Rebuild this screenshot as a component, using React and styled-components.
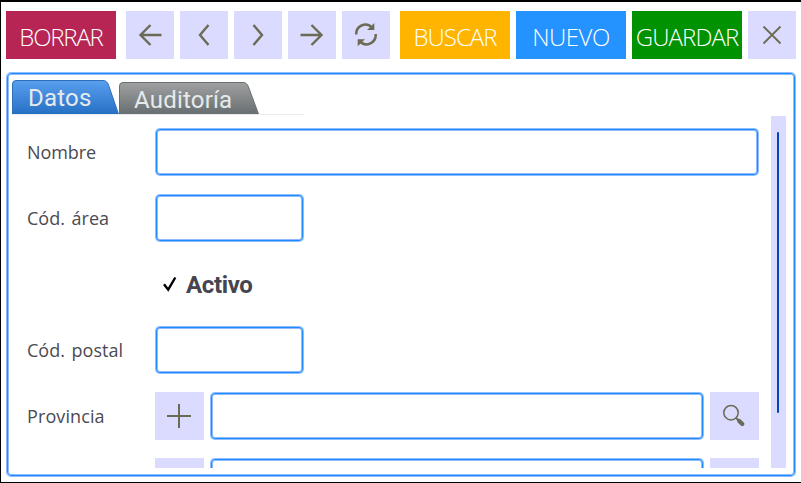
import React from "react";
import styled, { createGlobalStyle } from "styled-components";

const GlobalStyle = createGlobalStyle`
  * { box-sizing: border-box; }
  body { margin: 0; background: #fff; overflow: hidden; }
  button { border: 0; padding: 0; }
`;

const Window = styled.div`
  display: flex;
  flex-direction: column;
  width: 801px;
  height: 483px;
  padding: 9px 5px 6px 5px;
  border: solid #000;
  border-width: 2px 0 1px 1px;
  background: #fff;
  overflow: hidden;
`;

const Toolbar = styled.div`
  display: flex;
  height: 48px;
  gap: 6px;
`;

const Group = styled.div`
  display: flex;
  gap: 6px;
  margin: 0 4px;
`;

const ActionButton = styled.button`
  display: flex;
  align-items: center;
  justify-content: center;
  width: 110px;
  height: 48px;
  padding-top: 2px;
  background: ${(p) => p.$color};
  color: #fff;
  font: 300 24px "Open Sans", sans-serif;
  letter-spacing: ${(p) => p.$spacing || 0}px;
  white-space: nowrap;
`;

const IconButton = styled.button`
  display: flex;
  align-items: center;
  justify-content: flex-start;
  flex: none;
  width: ${(p) => p.$width || 48}px;
  height: 48px;
  background: #dbdbff;
  color: #6b6b55;
  svg { display: block; }
`;

const Panel = styled.main`
  display: flex;
  flex-direction: column;
  width: 788px;
  height: 403px;
  margin: 14px 0 0 1px;
  padding: 6px 8px 7px 4px;
  border: 1px solid #1e8cff;
  border-radius: 4px;
  box-shadow: 0 0 0 1px #8ebcff, inset 0 0 0 1px #8ebcff;
`;

const TabBar = styled.div`
  display: flex;
  align-items: flex-end;
  width: 292px;
  height: 35px;
  border-bottom: 1px solid #ebebeb;
`;

const TabButton = styled.div`
  display: grid;
  width: ${(p) => p.$width}px;
  height: ${(p) => p.$height}px;
  > * { grid-area: 1 / 1; }
`;

const TabText = styled.span`
  padding: 4px 0 0 ${(p) => p.$left}px;
  color: #e6eaea;
  font: 400 24px/28px Roboto, sans-serif;
  letter-spacing: 0.2px;
  white-space: nowrap;
`;

const Content = styled.div`
  display: flex;
  justify-content: space-between;
  height: 352px;
  margin-top: 1px;
`;

const Form = styled.div`
  display: flex;
  flex-direction: column;
  gap: 18px;
  width: 748px;
  padding-top: 12px;
  overflow: hidden;
`;

const Row = styled.div`
  display: flex;
  flex: none;
  height: 48px;
`;

const Label = styled.label`
  flex: none;
  width: 143px;
  padding: 1px 0 0 15px;
  color: #4a4a52;
  font: 400 18px/46px "Open Sans", sans-serif;
  letter-spacing: ${(p) => p.$spacing || 0}px;
  word-spacing: 2px;
  white-space: nowrap;
`;

const Input = styled.input`
  width: ${(p) => p.$width - 2}px;
  height: 46px;
  margin: 1px;
  padding: 0 8px;
  border: 1px solid #1e8cff;
  border-radius: 4px;
  outline: 0;
  background: #fff;
  box-shadow: 0 0 0 1px #8ebcff, inset 0 0 0 1px #8ebcff;
  font: 18px "Open Sans", sans-serif;
`;

const Lookup = styled.div`
  display: flex;
  gap: 6px;
`;

const Check = styled.div`
  display: flex;
  align-items: center;
  gap: 7px;
  padding: 2px 0 0 7px;
  color: #45454f;
  font: 700 24px Roboto, sans-serif;
  letter-spacing: -0.35px;
`;

const Track = styled.div`
  display: flex;
  justify-content: center;
  width: 15px;
  height: 352px;
  padding-top: 16px;
  background: #dbdbff;
`;

const Thumb = styled.div`
  width: 2px;
  height: 281px;
  margin-right: 1px;
  border-radius: 1px;
  background: #0047b3;
`;

const strokes = { fill: "none", stroke: "currentColor", strokeWidth: 2.2 };

const LineIcon = ({ d, width = 2.4 }) => (
  <svg width="48" height="48" viewBox="0 0 48 48" {...strokes} strokeWidth={width}>
    <path d={d} />
  </svg>
);

const RefreshIcon = () => (
  <svg width="48" height="48" viewBox="0 0 48 48" {...strokes}>
    <path d="M14.2 23.5C14 14.2 24.5 10.2 30.5 17M33.8 23C34 32.5 23.5 36.8 17.5 30" strokeWidth="2.5" />
    <path d="M32.3 12V19H25ZM15.7 35.3V28.2H23Z" fill="currentColor" stroke="none" />
  </svg>
);

const SearchIcon = () => (
  <svg width="48" height="48" viewBox="0 0 48 48" {...strokes}>
    <circle cx="21" cy="20.7" r="7.2" strokeWidth="1.5" />
    <path d="M26 26L28.5 28.3" strokeWidth="1.9" />
    <path d="M29.2 29L32.3 32" strokeWidth="4.2" strokeLinecap="round" />
  </svg>
);

function Tab({ id, width, height, colors, edge, left, children }) {
  return (
    <TabButton $width={width} $height={height}>
      <svg width={width} height={height}>
        <defs>
          <linearGradient id={id} x1="0" y1="0" x2="0" y2="1">
            <stop stopColor={colors[0]} />
            <stop offset="1" stopColor={colors[1]} />
          </linearGradient>
        </defs>
        <path
          d={`M.5 ${height}V4Q.5 .5 4 .5H${width - 16}Q${width - 12} .5 ${width - 10.5} 5L${width - 0.5} ${height}`}
          fill={`url(#${id})`}
          stroke={edge}
          strokeWidth="1"
        />
      </svg>
      <TabText $left={left}>{children}</TabText>
    </TabButton>
  );
}

const LookupField = () => (
  <Lookup>
    <IconButton $width={49}><LineIcon d="M24 12V36M12 24H36" width={2} /></IconButton>
    <Input $width={494} />
    <IconButton $width={49}><SearchIcon /></IconButton>
  </Lookup>
);

export default function App() {
  return (
    <>
      <GlobalStyle />
      <Window>
        <Toolbar>
          <ActionButton $color="#b62553" $spacing={-1.2}>BORRAR</ActionButton>
          <Group>
            <IconButton><LineIcon d="M35.5 24H14M24.5 14L14.5 24L24.5 34" /></IconButton>
            <IconButton><LineIcon d="M28.5 14L20 24L28.5 34" /></IconButton>
            <IconButton><LineIcon d="M19.5 14L28 24L19.5 34" /></IconButton>
            <IconButton><LineIcon d="M12.5 24H34M23.5 14L33.5 24L23.5 34" /></IconButton>
            <IconButton><RefreshIcon /></IconButton>
          </Group>
          <ActionButton $color="#ffb400" $spacing={-1}>BUSCAR</ActionButton>
          <ActionButton $color="#2492ff" $spacing={-0.5}>NUEVO</ActionButton>
          <ActionButton $color="#009200" $spacing={-0.9}>GUARDAR</ActionButton>
          <IconButton><LineIcon d="M15.5 15.5L32.5 32.5M32.5 15.5L15.5 32.5" width={1.8} /></IconButton>
        </Toolbar>
        <Panel>
          <TabBar>
            <Tab id="active-tab" width={107} height={34} colors={["#5a9ff0", "#2670c4"]} edge="#2d6fb8" left={16}>Datos</Tab>
            <Tab id="idle-tab" width={140} height={32} colors={["#a0a0a0", "#686f71"]} edge="#667174" left={15}>Auditoría</Tab>
          </TabBar>
          <Content>
            <Form>
              <Row><Label $spacing={-0.1}>Nombre</Label><Input $width={604} /></Row>
              <Row><Label>Cód. área</Label><Input $width={149} /></Row>
              <Row>
                <Label />
                <Check>
                  <svg width="17" height="20" viewBox="0 0 17 20" {...strokes} stroke="#000" strokeWidth="2.4">
                    <path d="M2 9.3L6.2 14.7L13.3 2.5" />
                  </svg>
                  Activo
                </Check>
              </Row>
              <Row><Label>Cód. postal</Label><Input $width={149} /></Row>
              <Row><Label $spacing={0.1}>Provincia</Label><LookupField /></Row>
              <Row><Label /><LookupField /></Row>
            </Form>
            <Track><Thumb /></Track>
          </Content>
        </Panel>
      </Window>
    </>
  );
}
